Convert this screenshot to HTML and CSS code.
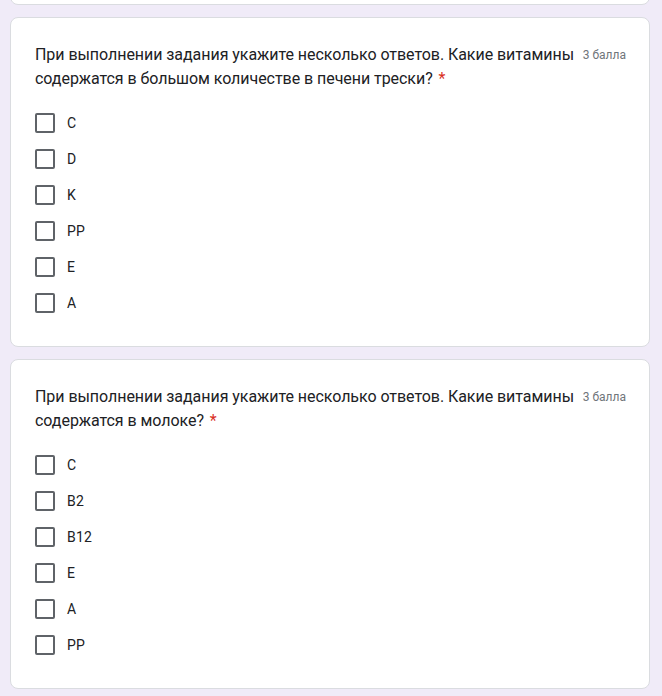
FILE: index.html
```html
<!DOCTYPE html>
<html lang="ru">
<head>
<meta charset="utf-8">
<link rel="stylesheet" href="styles.css">
</head>
<body>
<div class="page">
  <div class="card card-cut"></div>

  <div class="card">
    <div class="q-title"><span class="q-points">3 балла</span>При выполнении задания укажите несколько ответов. Какие витамины содержатся в большом количестве в печени трески?&nbsp;<span class="req">*</span></div>
    <div class="options">
      <label class="opt"><span class="box"></span><span class="opt-text">C</span></label>
      <label class="opt"><span class="box"></span><span class="opt-text">D</span></label>
      <label class="opt"><span class="box"></span><span class="opt-text">K</span></label>
      <label class="opt"><span class="box"></span><span class="opt-text">PP</span></label>
      <label class="opt"><span class="box"></span><span class="opt-text">E</span></label>
      <label class="opt"><span class="box"></span><span class="opt-text">A</span></label>
    </div>
  </div>

  <div class="card">
    <div class="q-title"><span class="q-points">3 балла</span>При выполнении задания укажите несколько ответов. Какие витамины содержатся в молоке?&nbsp;<span class="req">*</span></div>
    <div class="options">
      <label class="opt"><span class="box"></span><span class="opt-text">C</span></label>
      <label class="opt"><span class="box"></span><span class="opt-text">B2</span></label>
      <label class="opt"><span class="box"></span><span class="opt-text">B12</span></label>
      <label class="opt"><span class="box"></span><span class="opt-text">E</span></label>
      <label class="opt"><span class="box"></span><span class="opt-text">A</span></label>
      <label class="opt"><span class="box"></span><span class="opt-text">PP</span></label>
    </div>
  </div>
</div>
</body>
</html>
```

FILE: styles.css
```css
* { box-sizing: border-box; }
html, body {
  margin: 0;
  padding: 0;
  background: #f0ebf8;
  height: 100%;
  overflow: hidden;
}
.page {
  width: 640px;
  margin-left: 10px;
  display: flex;
  flex-direction: column;
  gap: 12px;
}
.card {
  background: #fff;
  border: 1px solid #dadce0;
  border-radius: 8px;
  padding: 25px 24px 25px 24px;
}
.card-cut {
  height: 40px;
  margin-top: -35px;
  padding: 0;
}
.q-title {
  font-family: "Roboto", "Noto Sans", sans-serif;
  font-size: 16px;
  line-height: 24px;
  color: #202124;
  letter-spacing: -0.05px;
}
.req { color: #d93025; margin-left: 2px; }
.q-points {
  float: right;
  font-family: "Roboto", sans-serif;
  font-size: 12px;
  line-height: 24px;
  color: #70757a;
  margin-left: 2px;
  margin-right: -1px;
  letter-spacing: 0;
  white-space: nowrap;
}
.options {
  margin-top: 14px;
  display: flex;
  flex-direction: column;
}
.opt {
  display: flex;
  align-items: center;
  height: 36px;
}
.box {
  width: 20px;
  height: 20px;
  border: 2px solid #5f6368;
  border-radius: 2px;
  flex: none;
}
.opt-text {
  margin-left: 12px;
  font-family: "Roboto", "Liberation Sans", sans-serif;
  font-size: 14px;
  color: #202124;
  letter-spacing: 0.2px;
}
```
